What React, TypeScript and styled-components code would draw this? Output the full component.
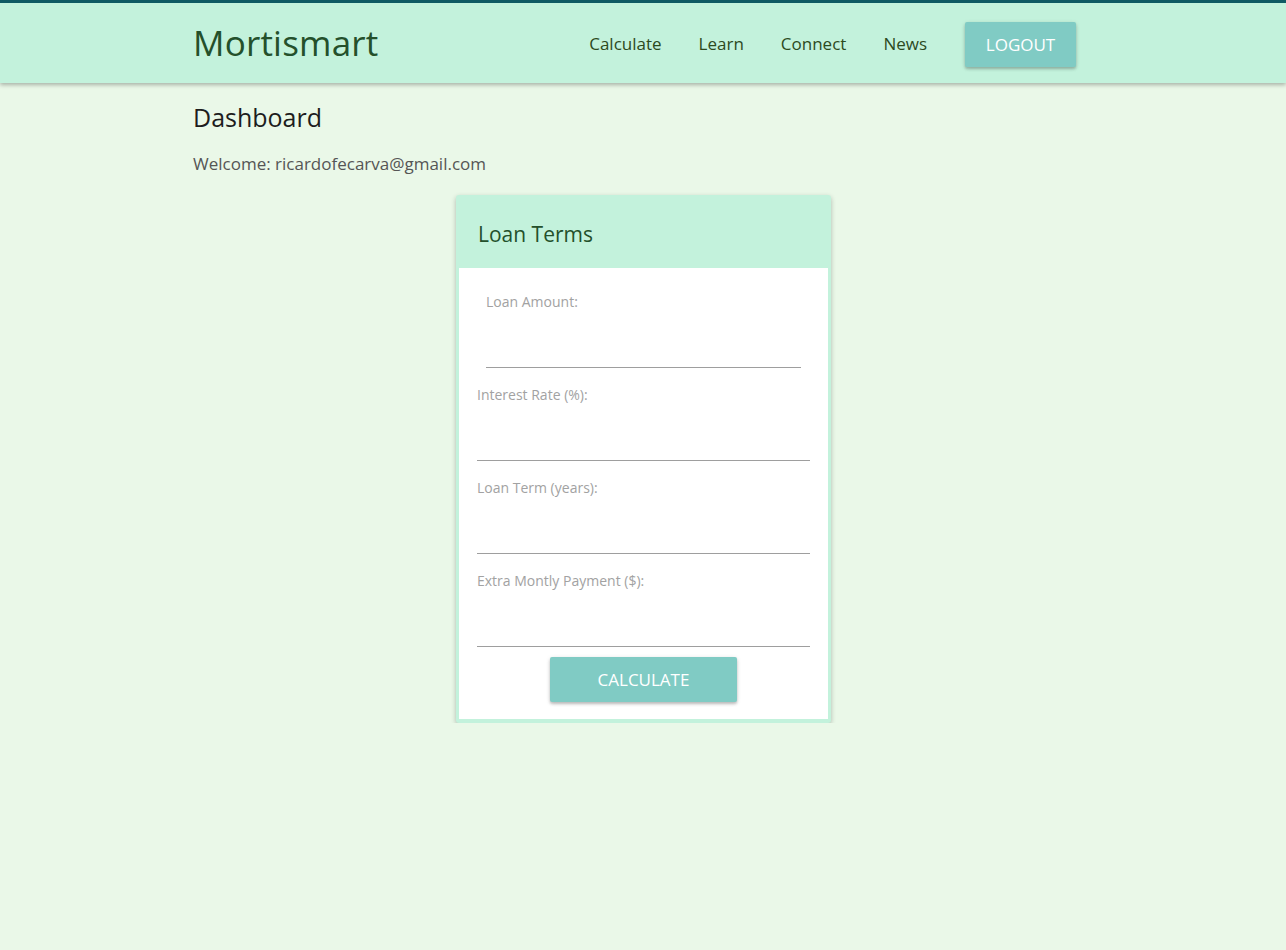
import React from 'react';
import styled, { createGlobalStyle } from 'styled-components';

const GlobalStyle = createGlobalStyle`
  html, body {
    margin: 0;
    padding: 0;
    background: #eaf8e8;
    font-family: 'Open Sans', 'Noto Sans', sans-serif;
    min-height: 100%;
  }
  * { box-sizing: border-box; }
`;

const NavBar = styled.nav`
  background: #c3f2dc;
  border-top: 3px solid #0f5a63;
  height: 83px;
  box-shadow: 0 2px 4px rgba(0, 0, 0, 0.28);
`;

const Container = styled.div`
  width: 900px;
  margin: 0 auto;
`;

const NavInner = styled(Container)`
  display: flex;
  align-items: center;
  height: 80px;
  padding-right: 17px;
`;

const Brand = styled.div`
  font-size: 35px;
  color: #24502b;
  letter-spacing: 0.2px;
  margin-top: -1px;
`;

const NavLinks = styled.div`
  margin-left: auto;
  display: flex;
  align-items: center;
  gap: 37px;
`;

const NavLink = styled.a`
  font-size: 17px;
  color: #2d4a1e;
  text-decoration: none;
  margin-top: 1px;
`;

const Button = styled.button<{ $width: number }>`
  width: ${(p) => p.$width}px;
  height: 45px;
  background: #80cbc4;
  color: #fff;
  border: none;
  border-radius: 2px;
  font-family: inherit;
  font-size: 17px;
  text-transform: uppercase;
  box-shadow: 0 2px 3px rgba(0, 0, 0, 0.22), 0 1px 5px rgba(0, 0, 0, 0.1);
  cursor: pointer;
`;

const LogoutButton = styled(Button)`
  margin-left: 38px;
  margin-top: 3px;
`;

const Main = styled(Container)`
  padding-top: 17px;
`;

const Heading = styled.h1`
  margin: 0;
  font-size: 25px;
  font-weight: 400;
  color: #1d1d1d;
  line-height: 34px;
`;

const Welcome = styled.p`
  margin: 18px 0 0;
  font-size: 17px;
  color: #555;
  line-height: 24px;
`;

const Card = styled.div`
  width: 375px;
  margin: 19px 0 0 263px;
  background: #c3f2dc;
  border-radius: 3px;
  padding: 0 3px 4px;
  box-shadow: 0 2px 5px rgba(0, 0, 0, 0.26);
`;

const CardTitle = styled.h2`
  margin: 0;
  height: 73px;
  display: flex;
  align-items: center;
  padding: 5px 0 0 19px;
  font-size: 21px;
  font-weight: 400;
  color: #24502b;
`;

const CardBody = styled.form`
  background: #fff;
  padding: 24px 18px 17px;
  display: flex;
  flex-direction: column;
`;

const Field = styled.label<{ $indent?: boolean }>`
  display: block;
  padding: 0 ${(p) => (p.$indent ? '9px' : '0')};
  margin-bottom: 17px;
`;

const Label = styled.span`
  display: block;
  font-size: 14px;
  color: #a2a2a2;
  line-height: 20px;
`;

const Input = styled.input`
  display: block;
  width: 100%;
  height: 56px;
  border: none;
  border-bottom: 1px solid #9e9e9e;
  outline: none;
  font-family: inherit;
  font-size: 16px;
  background: transparent;
`;

const ButtonRow = styled.div`
  display: flex;
  justify-content: center;
  margin-top: -7px;
`;

const fields = [
  { label: 'Loan Amount:', indent: true },
  { label: 'Interest Rate (%):' },
  { label: 'Loan Term (years):' },
  { label: 'Extra Montly Payment ($):' },
];

const App: React.FC = () => {
  return (
    <>
      <GlobalStyle />
      <NavBar>
        <NavInner>
          <Brand>Mortismart</Brand>
          <NavLinks>
            <NavLink href="#">Calculate</NavLink>
            <NavLink href="#">Learn</NavLink>
            <NavLink href="#">Connect</NavLink>
            <NavLink href="#">News</NavLink>
          </NavLinks>
          <LogoutButton $width={111}>Logout</LogoutButton>
        </NavInner>
      </NavBar>
      <Main>
        <Heading>Dashboard</Heading>
        <Welcome>Welcome: ricardofecarva@gmail.com</Welcome>
        <Card>
          <CardTitle>Loan Terms</CardTitle>
          <CardBody onSubmit={(e) => e.preventDefault()}>
            {fields.map((f) => (
              <Field key={f.label} $indent={f.indent}>
                <Label>{f.label}</Label>
                <Input type="text" />
              </Field>
            ))}
            <ButtonRow>
              <Button $width={187} type="submit">Calculate</Button>
            </ButtonRow>
          </CardBody>
        </Card>
      </Main>
    </>
  );
};

export default App;
